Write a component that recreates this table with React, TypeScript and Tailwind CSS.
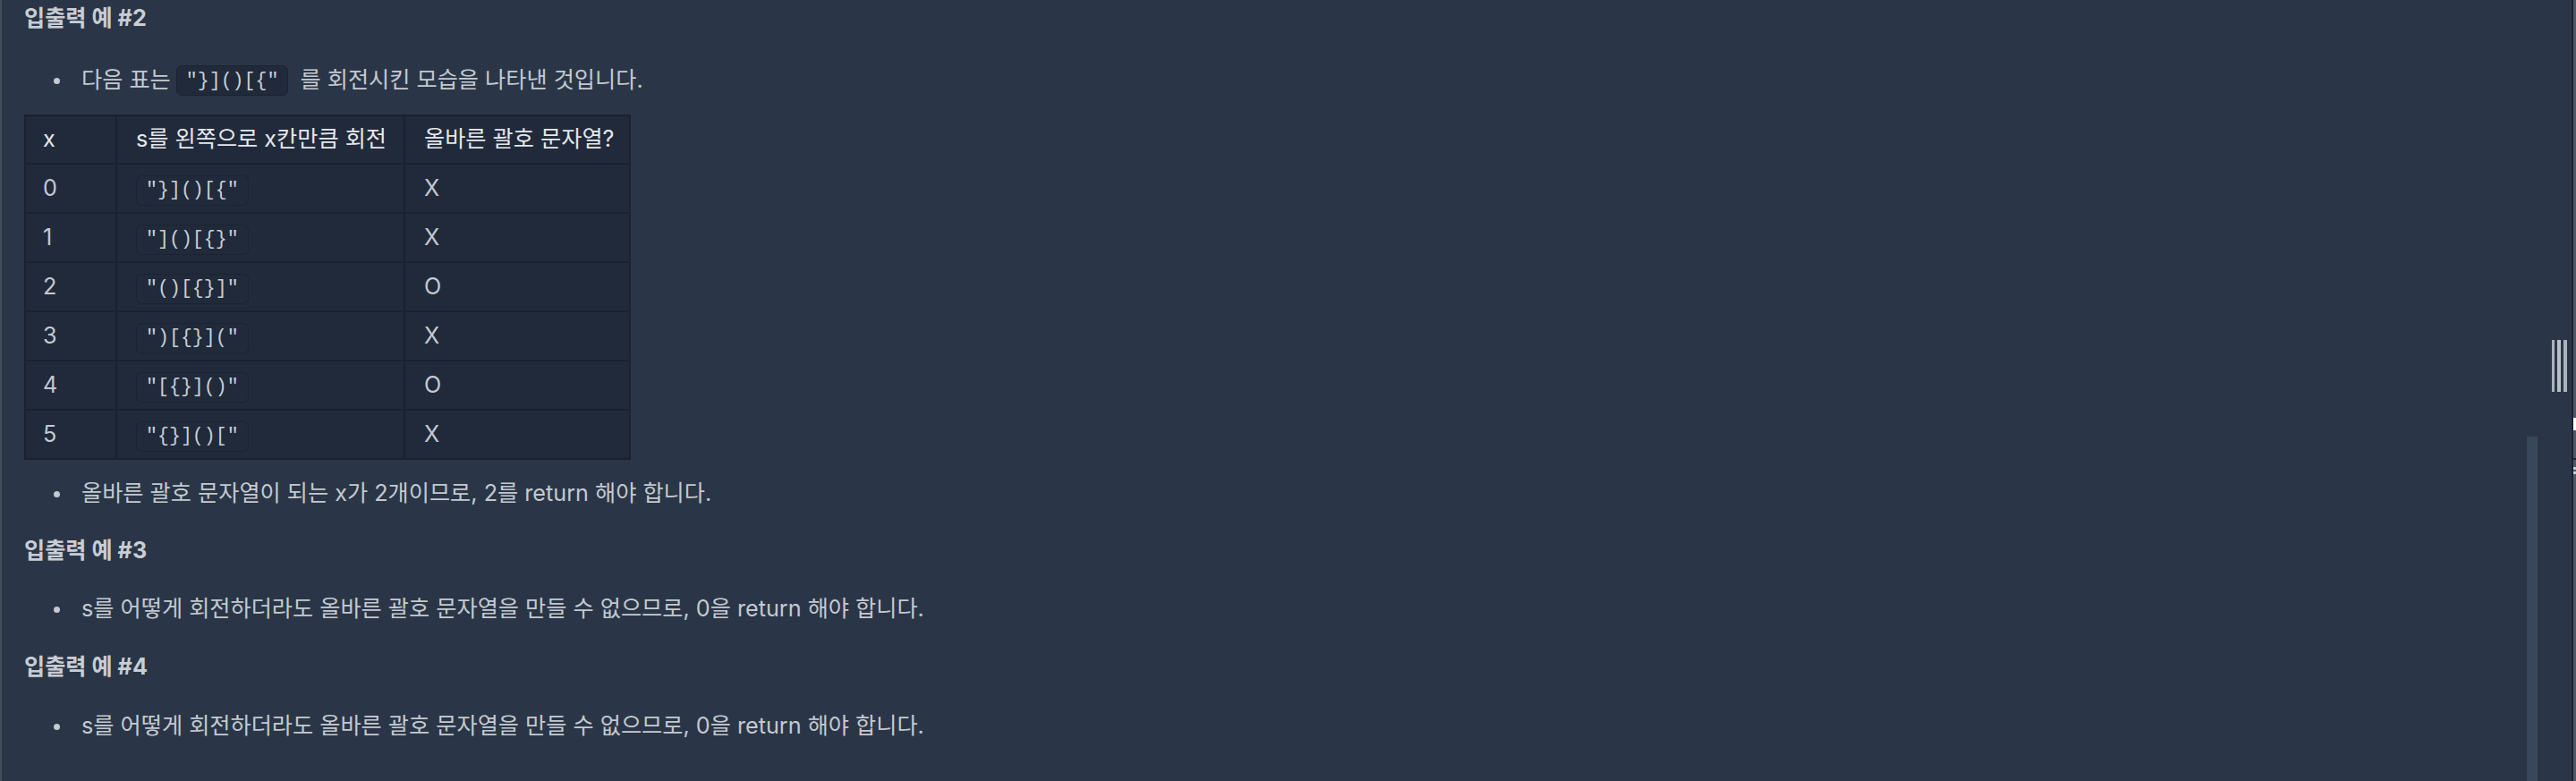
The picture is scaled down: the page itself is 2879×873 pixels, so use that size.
import React from "react";

// ---------------------------------------------------------------------------
// Data
// ---------------------------------------------------------------------------

const rows: { x: string; code: string; ok: string }[] = [
  { x: "0", code: '"}]()[{"', ok: "X" },
  { x: "1", code: '"]()[{}"', ok: "X" },
  { x: "2", code: '"()[{}]"', ok: "O" },
  { x: "3", code: '")[{}]("', ok: "X" },
  { x: "4", code: '"[{}]()"', ok: "O" },
  { x: "5", code: '"{}]()["', ok: "X" },
];

const sans = "font-['Inter','Noto_Sans_CJK_KR',sans-serif]";

// ---------------------------------------------------------------------------
// Pieces
// ---------------------------------------------------------------------------

function Code({ children, className = "" }: { children: string; className?: string }) {
  return (
    <code
      className={`inline-flex items-center h-[34px] px-[10px] rounded-[6px] border border-[#1b2331] bg-[#202a3a] font-['Liberation_Mono',monospace] text-[21.6px] text-[#c9ced6] whitespace-pre ${className}`}
    >
      {children}
    </code>
  );
}

function Heading({ children, className = "" }: { children: string; className?: string }) {
  return (
    <h3 className={`h-[40px] leading-[40px] text-[25.2px] font-bold text-[#c9cdd4] ${className}`}>
      {children}
    </h3>
  );
}

function Bullet({ children, className = "" }: { children: React.ReactNode; className?: string }) {
  return (
    <li className={`flex items-center h-[36px] ${className}`}>
      <span className="w-[7px] h-[7px] rounded-full bg-[#c4c9d0] ml-[33px] mr-[24px] shrink-0" />
      <span className="flex items-center text-[25.2px] text-[#c4c9d0] whitespace-pre">
        {children}
      </span>
    </li>
  );
}

// ---------------------------------------------------------------------------
// App
// ---------------------------------------------------------------------------

export default function App() {
  return (
    <div className={`flex w-[2879px] h-[873px] overflow-hidden bg-[#2a3647] ${sans}`}>
      {/* left edge */}
      <div className="w-[2px] h-full bg-[#434d5c] shrink-0" />

      {/* content */}
      <div className="relative flex-1 h-full pl-[25px]">
        <Heading>입출력 예 #2</Heading>
        <ul className="mt-[32px]">
          <Bullet>
            <span>다음 표는</span>
            <Code className="ml-[6px] mr-[13px]">{'"}]()[{"'}</Code>
            <span>를 회전시킨 모습을 나타낸 것입니다.</span>
          </Bullet>
        </ul>

        <table className="mt-[20px] border-collapse border-2 border-[#1a2130] bg-[#212a3b] text-[25.2px]">
          <thead>
            <tr className="h-[54px]">
              <th className="w-[102px] border-2 border-[#1a2130] pl-[19px] text-left font-normal text-[#e4e7eb]">x</th>
              <th className="w-[322px] border-2 border-[#1a2130] pl-[21px] text-left font-normal text-[#e4e7eb] whitespace-nowrap">s를 왼쪽으로 x칸만큼 회전</th>
              <th className="w-[252px] border-2 border-[#1a2130] pl-[21px] text-left font-normal text-[#e4e7eb] whitespace-nowrap">올바른 괄호 문자열?</th>
            </tr>
          </thead>
          <tbody>
            {rows.map((r) => (
              <tr key={r.x} className="h-[55px]">
                <td className="border-2 border-[#1a2130] pl-[19px] text-[#c4c9d0]">{r.x}</td>
                <td className="border-2 border-[#1a2130] pl-[21px]">
                  <Code>{r.code}</Code>
                </td>
                <td className="border-2 border-[#1a2130] pl-[21px] text-[#c4c9d0]">{r.ok}</td>
              </tr>
            ))}
          </tbody>
        </table>

        <ul className="mt-[20px]">
          <Bullet>올바른 괄호 문자열이 되는 x가 2개이므로, 2를 return 해야 합니다.</Bullet>
        </ul>

        <Heading className="mt-[25px]">입출력 예 #3</Heading>
        <ul className="mt-[28px]">
          <Bullet>s를 어떻게 회전하더라도 올바른 괄호 문자열을 만들 수 없으므로, 0을 return 해야 합니다.</Bullet>
        </ul>

        <Heading className="mt-[26px]">입출력 예 #4</Heading>
        <ul className="mt-[29px]">
          <Bullet>s를 어떻게 회전하더라도 올바른 괄호 문자열을 만들 수 없으므로, 0을 return 해야 합니다.</Bullet>
        </ul>

        {/* scrollbar thumb */}
        <div className="absolute left-[2822px] top-[488px] w-[12px] h-[385px] bg-[#39475a]" />

        {/* resize handle */}
        <div className="absolute left-[2850px] top-[380px] flex gap-[3px]">
          <span className="w-[3px] h-[58px] bg-[#a9b3bd]" />
          <span className="w-[4px] h-[58px] bg-[#b7c0c8]" />
          <span className="w-[4px] h-[58px] bg-[#a9b3bd]" />
        </div>
      </div>

      {/* right edge */}
      <div className="w-[2px] h-full bg-[#1c2333] shrink-0" />
      <div className="flex flex-col w-[3px] h-full bg-[#4d5869] shrink-0">
        <div className="h-[467px]" />
        <div className="h-[14px] bg-white" />
        <div className="h-[31px]" />
        <div className="h-[2px] bg-[#1c2333]" />
        <div className="h-[8px]" />
        <div className="h-[3px] bg-[#c5ccd4]" />
        <div className="h-[2px]" />
        <div className="h-[3px] bg-[#c5ccd4]" />
      </div>
    </div>
  );
}
